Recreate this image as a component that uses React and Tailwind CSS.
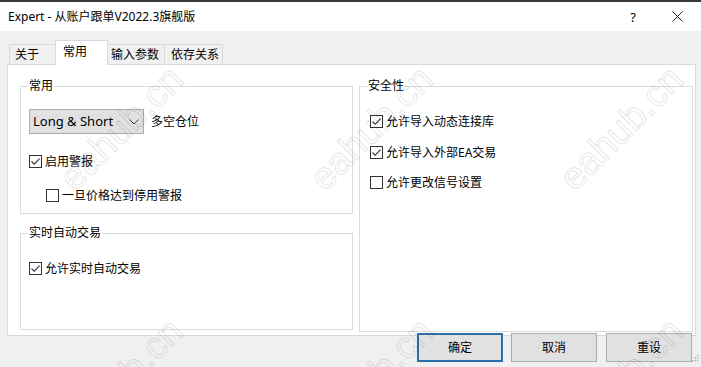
import React from 'react';

const WATERMARKS = [
  { x: 121, y: 128 },
  { x: 371, y: 128 },
  { x: 621, y: 128 },
  { x: 121, y: 380 },
  { x: 371, y: 380 },
  { x: 621, y: 380 },
];

function Checkbox({ checked }) {
  return (
    <span className="flex h-[13px] w-[13px] shrink-0 items-center justify-center border border-[#333] bg-white">
      {checked && (
        <svg width="11" height="11" viewBox="0 0 11 11">
          <path d="M1.5 5.5 L4.2 8.2 L9.6 2.6" fill="none" stroke="#333" strokeWidth="1.1" />
        </svg>
      )}
    </span>
  );
}

function CheckRow({ checked, label, className = '' }) {
  return (
    <div className={`flex h-[13px] items-center gap-[3px] ${className}`}>
      <Checkbox checked={checked} />
      <span className="whitespace-nowrap text-[12px] leading-[16px]">{label}</span>
    </div>
  );
}

function Group({ title, className = '', children }) {
  return (
    <div className={`relative flex flex-col border border-[#dcdcdc] ${className}`}>
      <span className="absolute -top-[9px] left-[7px] bg-white px-[1px] text-[12px] leading-[16px]">
        {title}
      </span>
      {children}
    </div>
  );
}

function Tab({ label, active, className = '' }) {
  return active ? (
    <div className={`relative z-10 -mb-px h-[25px] border border-b-0 border-[#d9d9d9] bg-white pt-[3px] text-[12px] leading-[16px] ${className}`}>
      {label}
    </div>
  ) : (
    <div className={`h-[20px] border-t border-[#d9d9d9] bg-[#f0f0f0] pt-[2px] text-[12px] leading-[16px] ${className}`}>
      {label}
    </div>
  );
}

function Button({ label, focused, className = '' }) {
  return (
    <button
      type="button"
      className={`flex h-[29px] w-[86px] items-center justify-center bg-[#e1e1e1] text-[12px] leading-[16px] ${
        focused ? 'border-2 border-[#2a6fa9]' : 'border border-[#adadad]'
      } ${className}`}
    >
      {label}
    </button>
  );
}

export default function App() {
  return (
    <div className="relative h-[367px] w-[701px] overflow-hidden bg-[#f0f0f0] font-['Noto_Sans','Noto_Sans_CJK_SC',sans-serif] text-black">
      {/* title bar */}
      <div className="h-[2px] bg-[#3a3a3a]" />
      <div className="flex h-[29px] items-center bg-white pl-[8px] text-[12px] leading-[16px]">
        <span>Expert - 从账户跟单V2022.3旗舰版</span>
        <span className="ml-auto text-[13px]">?</span>
        <svg className="ml-[36px] mr-[18px]" width="11" height="11" viewBox="0 0 11 11">
          <path d="M0.5 0.5 L10.5 10.5 M10.5 0.5 L0.5 10.5" stroke="#222" strokeWidth="1" />
        </svg>
      </div>

      {/* tabs */}
      <div className="relative z-10 ml-[9px] mt-[9px] flex h-[24px] items-end">
        <Tab label="关于" className="w-[46px] border-l pl-[5px]" />
        <Tab label="常用" active className="w-[53px] pl-[7px]" />
        <Tab label="输入参数" className="w-[57px] border-r pl-[3px]" />
        <Tab label="依存关系" className="w-[58px] border-r pl-[6px]" />
      </div>

      {/* panel */}
      <div className="ml-[7px] flex h-[272px] w-[689px] border border-[#d9d9d9] bg-white">
        <div className="ml-[12px] mt-[21px] flex w-[333px] flex-col">
          <Group title="常用" className="h-[128px]">
            <div className="ml-[8px] mt-[22px] flex items-center">
              <div className="flex h-[25px] w-[115px] items-center justify-between border border-[#adadad] bg-[#e1e1e1] pl-[3px] pr-[4px] text-[13px]">
                <span>Long &amp; Short</span>
                <svg width="10" height="6" viewBox="0 0 10 6">
                  <path d="M0.5 0.5 L5 5 L9.5 0.5" fill="none" stroke="#444" strokeWidth="1" />
                </svg>
              </div>
              <span className="ml-[7px] text-[12px] leading-[16px]">多空仓位</span>
            </div>
            <CheckRow checked label="启用警报" className="ml-[8px] mt-[21px]" />
            <CheckRow label="一旦价格达到停用警报" className="ml-[25px] mt-[21px]" />
          </Group>
          <Group title="实时自动交易" className="mt-[19px] h-[97px]">
            <CheckRow checked label="允许实时自动交易" className="ml-[8px] mt-[28px]" />
          </Group>
        </div>
        <div className="ml-[6px] mt-[21px] w-[334px]">
          <Group title="安全性" className="h-[246px]">
            <CheckRow checked label="允许导入动态连接库" className="ml-[10px] mt-[28px]" />
            <CheckRow checked label="允许导入外部EA交易" className="ml-[10px] mt-[18px]" />
            <CheckRow label="允许更改信号设置" className="ml-[10px] mt-[17px]" />
          </Group>
        </div>
      </div>

      {/* buttons */}
      <div className="relative z-10 -mt-[3px] flex pl-[417px]">
        <Button label="确定" focused />
        <Button label="取消" className="ml-[8px]" />
        <Button label="重设" className="ml-[9px]" />
      </div>

      {/* resize grip */}
      <svg className="absolute bottom-[5px] right-[2px]" width="7" height="7" viewBox="0 0 7 7">
        <rect x="5" y="0" width="1.5" height="1.5" fill="#b5b5b5" />
        <rect x="2.5" y="2.5" width="1.5" height="1.5" fill="#b5b5b5" />
        <rect x="5" y="2.5" width="1.5" height="1.5" fill="#b5b5b5" />
        <rect x="0" y="5" width="1.5" height="1.5" fill="#b5b5b5" />
        <rect x="2.5" y="5" width="1.5" height="1.5" fill="#b5b5b5" />
        <rect x="5" y="5" width="1.5" height="1.5" fill="#b5b5b5" />
      </svg>

      {/* watermarks */}
      {WATERMARKS.map((w, i) => (
        <span
          key={i}
          className="pointer-events-none absolute z-20 -translate-x-1/2 -translate-y-1/2 -rotate-[45deg] whitespace-nowrap font-['Liberation_Sans',sans-serif] text-[38px] leading-none text-transparent [-webkit-text-stroke:1px_rgba(0,0,0,0.12)]"
          style={{ left: w.x, top: w.y }}
        >
          eahub.cn
        </span>
      ))}
    </div>
  );
}
